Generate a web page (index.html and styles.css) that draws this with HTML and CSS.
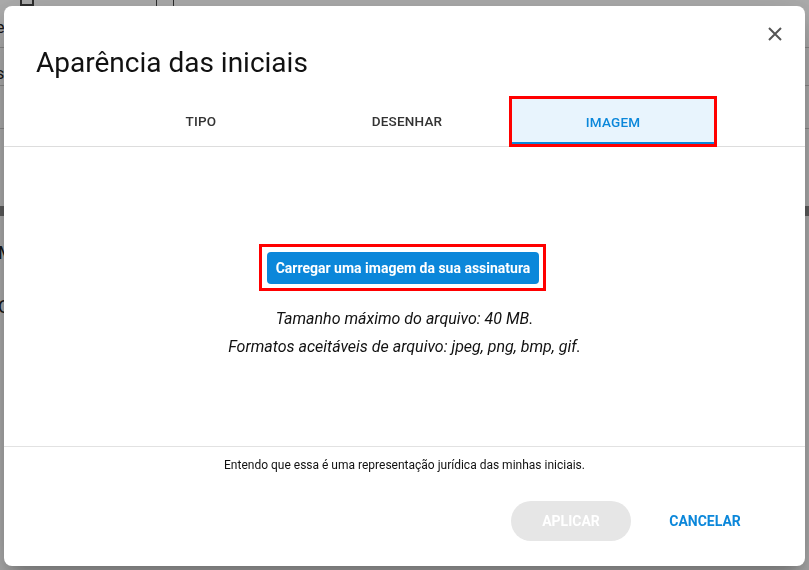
FILE: index.html
```html
<html>
	<head>
		<title>Aparência das iniciais</title>
		<link rel="stylesheet" href="styles.css">
	</head>
	<body>
		<div class="page">
			<div class="page-top">
				<span class="page-icon"></span>
				<span class="page-sep"></span>
				<span class="page-sep"></span>
			</div>
			<div class="page-row first">estado</div>
			<div class="page-row second">status</div>
			<div class="page-row third"></div>
			<div class="page-band"></div>
			<div class="page-text">Meus documentos</div>
			<div class="page-text low">Concluídos</div>
		</div>
		<div class="backdrop">
			<div class="dialog">
				<div class="dialog-head">
					<h1>Aparência das iniciais</h1>
					<button class="close-btn" aria-label="Fechar">
						<svg width="14" height="14" viewBox="0 0 14 14">
							<path d="M1 1L13 13M13 1L1 13" stroke="#555" stroke-width="2" fill="none"/>
						</svg>
					</button>
				</div>
				<div class="tabs">
					<a href="javascript:void(0);" class="tab">TIPO</a>
					<a href="javascript:void(0);" class="tab">DESENHAR</a>
					<a href="javascript:void(0);" class="tab active">IMAGEM</a>
				</div>
				<div class="dialog-body">
					<div class="upload-mark">
						<button class="upload-btn">Carregar uma imagem da sua assinatura</button>
					</div>
					<p class="hint">Tamanho máximo do arquivo: 40 MB.<br>Formatos aceitáveis de arquivo: jpeg, png, bmp, gif.</p>
				</div>
				<div class="dialog-foot">
					<p class="legal">Entendo que essa é uma representação jurídica das minhas iniciais.</p>
					<div class="actions">
						<button class="btn-apply" disabled>APLICAR</button>
						<button class="btn-cancel">CANCELAR</button>
					</div>
				</div>
			</div>
		</div>
	</body>
</html>
```

FILE: styles.css
```css
* {
	margin: 0;
	padding: 0;
	box-sizing: border-box;
}
body {
	font-family: Roboto, "Liberation Sans", sans-serif;
	background: #fff;
	width: 809px;
	height: 570px;
	overflow: hidden;
}
/* page behind the modal */
.page {
	color: #222;
	font-size: 16px;
}
.page-top {
	height: 8px;
	display: flex;
	padding-left: 20px;
}
.page-icon {
	width: 14px;
	height: 6px;
	border: 2px solid #444;
	border-top: none;
	margin-right: 122px;
}
.page-sep {
	width: 17px;
	border-left: 1px solid #444;
}
.page-row {
	margin-left: -4px;
	border-bottom: 1px solid #ccc;
}
.page-row.first {
	height: 40px;
	padding-top: 10px;
}
.page-row.second {
	height: 38px;
	padding-top: 16px;
}
.page-row.third {
	height: 43px;
}
.page-band {
	height: 87px;
	border-bottom: 10px solid #888;
}
.page-text {
	margin-left: -2px;
	height: 80px;
	padding-top: 26px;
	font-size: 18px;
}
.page-text.low {
	padding-top: 0;
}
/* modal */
.backdrop {
	position: fixed;
	top: 0;
	left: 0;
	right: 0;
	bottom: 0;
	background: rgba(0, 0, 0, 0.32);
	padding: 6px 4px 4px 4px;
}
.dialog {
	background: #fff;
	border-radius: 8px;
	height: 560px;
	display: flex;
	flex-direction: column;
	box-shadow: 0 11px 15px -7px rgba(0,0,0,.2), 0 24px 38px 3px rgba(0,0,0,.14), 0 9px 46px 8px rgba(0,0,0,.12);
}
.dialog-head {
	display: flex;
	justify-content: space-between;
	align-items: flex-start;
	padding: 36px 15px 0 32px;
	height: 90px;
}
.dialog-head h1 {
	font-size: 28px;
	font-weight: 400;
	color: #111;
	line-height: 40px;
	margin-top: 1px;
}
.close-btn {
	border: none;
	background: none;
	width: 30px;
	height: 30px;
	margin-top: -23px;
	display: flex;
	align-items: center;
	justify-content: center;
}
.tabs {
	display: flex;
	padding-left: 94px;
	border-bottom: 1px solid #ddd;
}
.tab {
	width: 206px;
	height: 50px;
	display: flex;
	align-items: center;
	justify-content: center;
	text-decoration: none;
	font-size: 13.5px;
	font-weight: 500;
	color: #333;
	letter-spacing: 0.2px;
}
.tab.active {
	width: 208px;
	margin-left: -1px;
	background: #e8f4fd;
	color: #0b87da;
	box-shadow: inset 0 -5px 0 #0b87da;
	outline: 3px solid #ff0000;
	outline-offset: -3px;
	margin-bottom: -1px;
	height: 51px;
}
.dialog-body {
	flex: 1;
	display: flex;
	flex-direction: column;
	align-items: center;
	justify-content: center;
	border-bottom: 1px solid #e2e2e2;
	padding-top: 11px;
}
.upload-mark {
	border: 3px solid #ff0000;
	padding: 5px 4px 4px 5px;
	margin-right: 4px;
}
.upload-btn {
	background: #0b87da;
	color: #fff;
	border: none;
	border-radius: 4px;
	font-family: Roboto, "Liberation Sans", sans-serif;
	font-size: 14px;
	font-weight: 700;
	height: 32px;
	padding: 0 9px;
}
.hint {
	margin-top: 14px;
	font-size: 16px;
	font-style: italic;
	line-height: 28px;
	text-align: center;
	color: #111;
}
.dialog-foot {
	height: 119px;
	padding-top: 10px;
}
.legal {
	font-size: 12px;
	line-height: 16px;
	text-align: center;
	color: #111;
}
.actions {
	display: flex;
	justify-content: flex-end;
	gap: 14px;
	padding-right: 40px;
	margin-top: 28px;
}
.actions button {
	width: 120px;
	height: 40px;
	border: none;
	border-radius: 20px;
	font-family: Roboto, "Liberation Sans", sans-serif;
	font-size: 14px;
	font-weight: 700;
}
.btn-apply {
	background: #e6e6e6;
	color: #fff;
}
.btn-cancel {
	background: none;
	color: #0b87da;
}
```
